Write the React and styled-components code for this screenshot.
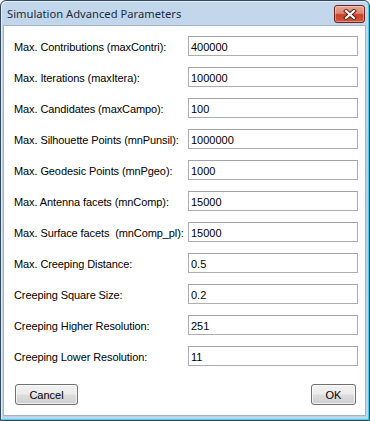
import React from 'react'
import styled, { createGlobalStyle } from 'styled-components';

const GlobalStyle = createGlobalStyle`
  html, body {
    margin:0;
    padding:0;
    background:#fff;
  }
`;

const Window = styled.div`
  box-sizing:border-box;
  width:370px;
  height:421px;
  display:flex;
  flex-direction:column;
  background:linear-gradient(180deg, #c3d7ec 0%, #b9cfe6 40%, #bfd3e9 100%);
  border:1px solid #34475c;
  border-radius:6px 6px 0 0;
  box-shadow:inset -1px -1px 0 #3fd0ea, inset 1px 1px 0 #e4eef8;
  font-family:"Liberation Sans", Arial, sans-serif;
`;

const TitleBar = styled.div`
  height:24px;
  display:flex;
  align-items:flex-start;
  justify-content:space-between;
  padding:0 4px 0 6px;
`;

const Title = styled.span`
  font-family:"Noto Sans", "Liberation Sans", sans-serif;
  font-size:11.2px;
  color:#1c2b3d;
  margin-top:5px;
`;

const CloseButton = styled.button`
  width:31px;
  height:18px;
  margin-top:4px;
  padding:0;
  border:1px solid #6c2417;
  border-radius:3px;
  background:linear-gradient(180deg, #eaa595 0%, #dd8670 45%, #c8402a 55%, #d2573c 100%);
  box-shadow:inset 0 0 0 1px rgba(255,255,255,0.35);
  display:flex;
  align-items:center;
  justify-content:center;
`;

const Client = styled.div`
  flex:1;
  display:flex;
  flex-direction:column;
  background:#fff;
  margin:0 3px 4px 2px;
  border:1px solid #9fb5cc;
  padding:10px 9px 9px 10px;
`;

const Form = styled.div`
  display:grid;
  grid-template-columns:174px 170px;
  grid-auto-rows:20px;
  row-gap:11px;
`;

const Label = styled.label`
  box-sizing:border-box;
  font-size:11px;
  letter-spacing:-0.1px;
  white-space:pre;
  color:#000;
  display:flex;
  align-items:center;
  height:20px;
  padding-top:1px;
`;

const Field = styled.input`
  box-sizing:border-box;
  width:170px;
  height:20px;
  border:1px solid #abadb3;
  border-top-color:#a2a4aa;
  padding:1px 2px 0;
  font-family:"Liberation Sans", Arial, sans-serif;
  font-size:11px;
  color:#000;
  outline:0;
  background:#fff;
`;

const Footer = styled.div`
  margin-top:auto;
  display:flex;
  justify-content:space-between;
  padding:0 0 1px 1px;
`;

const Button = styled.button`
  box-sizing:border-box;
  width:${p => p.$w}px;
  height:21px;
  border:1px solid #707070;
  border-radius:3px;
  background:linear-gradient(180deg, #f2f2f2 0%, #ebebeb 48%, #dddddd 52%, #cfcfcf 100%);
  box-shadow:inset 0 0 0 1px rgba(255,255,255,0.7);
  font-family:"Liberation Sans", Arial, sans-serif;
  font-size:11px;
  color:#000;
  padding:0;
`;

const params = [
  ['Max. Contributions (maxContri):', '400000'],
  ['Max. Iterations (maxItera):', '100000'],
  ['Max. Candidates (maxCampo):', '100'],
  ['Max. Silhouette Points (mnPunsil):', '1000000'],
  ['Max. Geodesic Points (mnPgeo):', '1000'],
  ['Max. Antenna facets (mnComp):', '15000'],
  ['Max. Surface facets  (mnComp_pl):', '15000'],
  ['Max. Creeping Distance:', '0.5'],
  ['Creeping Square Size:', '0.2'],
  ['Creeping Higher Resolution:', '251'],
  ['Creeping Lower Resolution:', '11'],
];

function CloseGlyph() {
  return (
    <svg width="14" height="11" viewBox="0 0 14 11">
      <path d="M3 2 L11 9 M11 2 L3 9" stroke="#5a1a10" strokeWidth="4" strokeLinecap="square" />
      <path d="M3 2 L11 9 M11 2 L3 9" stroke="#fff" strokeWidth="2.2" strokeLinecap="square" />
    </svg>
  );
}

function App() {
  return (
    <>
      <GlobalStyle />
      <Window>
        <TitleBar>
          <Title>Simulation Advanced Parameters</Title>
          <CloseButton><CloseGlyph /></CloseButton>
        </TitleBar>
        <Client>
          <Form>
            {params.map(([label, value]) => (
              <React.Fragment key={label}>
                <Label>{label}</Label>
                <Field value={value} readOnly />
              </React.Fragment>
            ))}
          </Form>
          <Footer>
            <Button $w={63}>Cancel</Button>
            <Button $w={45}>OK</Button>
          </Footer>
        </Client>
      </Window>
    </>
  )
}

export default App
